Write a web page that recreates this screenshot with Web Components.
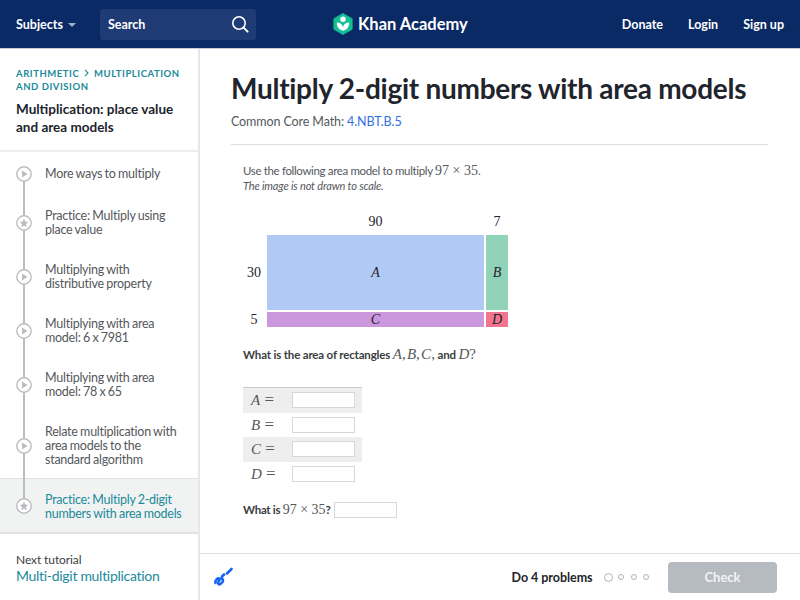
<!DOCTYPE html>
<html>
<head>
<meta charset="utf-8">
<title>Multiply 2-digit numbers with area models</title>
<style>
    html, body { margin: 0; padding: 0; }
    body { width: 800px; height: 600px; overflow: hidden; background: #fff; font-family: Lato, "Liberation Sans", sans-serif; color: #21242c; }
    ka-page-body { height: 551px; }
</style>
</head>
<body>
<ka-header></ka-header>
<ka-page-body>
    <ka-sidebar slot="side">
        <ka-lesson kind="play">More ways to multiply</ka-lesson>
        <ka-lesson kind="star">Practice: Multiply using place value</ka-lesson>
        <ka-lesson kind="play">Multiplying with distributive property</ka-lesson>
        <ka-lesson kind="play">Multiplying with area model: 6 x 7981</ka-lesson>
        <ka-lesson kind="play">Multiplying with area model: 78 x 65</ka-lesson>
        <ka-lesson kind="play">Relate multiplication with area models to the standard algorithm</ka-lesson>
        <ka-lesson kind="star" active last>Practice: Multiply 2-digit numbers with area models</ka-lesson>
    </ka-sidebar>
    <ka-exercise slot="main">
        <ka-area-model></ka-area-model>
        <ka-answer-table>
            <ka-answer-row shaded><ka-math var>A</ka-math></ka-answer-row>
            <ka-answer-row><ka-math var>B</ka-math></ka-answer-row>
            <ka-answer-row shaded><ka-math var>C</ka-math></ka-answer-row>
            <ka-answer-row><ka-math var>D</ka-math></ka-answer-row>
        </ka-answer-table>
    </ka-exercise>
</ka-page-body>

<script>
const LATO = 'Lato, "Liberation Sans", sans-serif';

class KaMath extends HTMLElement {
    constructor() {
        super();
        this.attachShadow({mode: 'open'}).innerHTML = `
<style>
    :host { font-family: "Liberation Serif", serif; font-size: var(--math-size, 14px); color: var(--math-color, #55585c); font-weight: 400; letter-spacing: 0; word-spacing: 0; }
    :host([var]) { font-style: italic; }
</style><slot></slot>`;
    }
}

class KaHeader extends HTMLElement {
    constructor() {
        super();
        this.attachShadow({mode: 'open'}).innerHTML = `
<style>
    :host { display: flex; align-items: center; height: 48px; background: #0a2a66; border-bottom: 1px solid #c9ccd6; color: #fff; font-family: ${LATO}; font-size: 12.5px; font-weight: 700; }
    .subjects { display: flex; align-items: center; margin-left: 16px; width: 84px; }
    .caret { width: 0; height: 0; margin-left: 5px; margin-top: 1px; border: 4px solid transparent; border-top: 4px solid #9fb0cc; border-bottom: 0; }
    .search { display: flex; align-items: center; justify-content: space-between; box-sizing: border-box; width: 156px; height: 31px; padding: 0 7px 0 8px; background: #1f3b75; border-radius: 3px; }
    .search svg { display: block; }
    .logo { flex: 1; display: flex; align-items: center; justify-content: center; gap: 5px; margin-left: -77px; font-size: 16.5px; }
    nav { display: flex; gap: 25px; margin-right: 16px; }
</style>
<div class="subjects">Subjects<span class="caret"></span></div>
<div class="search">Search
    <svg width="18" height="18" viewBox="0 0 18 18" fill="none" stroke="#fff" stroke-width="1.6"><circle cx="8" cy="8" r="6.2"/><path d="M12.6 12.6 16.600 16.600" stroke-linecap="round" stroke-width="2"/></svg>
</div>
<div class="logo">
    <svg width="20" height="22" viewBox="0 0 22 24"><path d="M11 0.5 21 6.2V17.8L11 23.5 1 17.8V6.2Z" fill="#14bf96" stroke="#14bf96" stroke-linejoin="round"/><circle cx="11" cy="6.800" r="3" fill="#fff"/><path d="M4.2 10.400c3.800 0 6.200 2 6.800 5.400.6-3.400 3-5.400 6.800-5.400 0 5-2.600 8.400-6.800 9-4.200-.6-6.800-4-6.800-9z" fill="#fff"/></svg>
    <span>Khan Academy</span>
</div>
<nav><span>Donate</span><span>Login</span><span>Sign up</span></nav>`;
    }
}

class KaPageBody extends HTMLElement {
    constructor() {
        super();
        this.attachShadow({mode: 'open'}).innerHTML = `
<style>
    :host { display: flex; }
    .side { flex: 0 0 198px; display: flex; border-right: 2px solid #e6e7e9; }
    .main { flex: 1; display: flex; min-width: 0; }
</style>
<div class="side"><slot name="side"></slot></div>
<div class="main"><slot name="main"></slot></div>`;
    }
}

class KaSidebar extends HTMLElement {
    constructor() {
        super();
        this.attachShadow({mode: 'open'}).innerHTML = `
<style>
    :host { display: flex; flex-direction: column; flex: 1; min-width: 0; font-family: ${LATO}; }
    .top { box-sizing: border-box; height: 103px; padding: 18px 12px 0 16px; border-bottom: 2px solid #eeeeef; }
    .crumbs { font-size: 9.500px; line-height: 13px; font-weight: 700; letter-spacing: .55px; color: #1b8a9a; text-transform: uppercase; }
    .crumbs svg { margin: 0 2px 0 2px; }
    h2 { margin: 7px 0 0; font-size: 13.500px; line-height: 18px; font-weight: 700; color: #21242c; }
    .list { padding-top: 2px; }
    .next { padding: 18px 16px 0; font-size: 12px; line-height: 16px; letter-spacing: -.1px; color: #3b3e40; }
    .next a { display: block; font-size: 14px; line-height: 16px; letter-spacing: -.3px; color: #1b8a9a; }
</style>
<div class="top">
    <div class="crumbs">Arithmetic <svg width="5" height="8" viewBox="0 0 5 8" fill="none" stroke="#1b8a9a" stroke-width="1.100"><path d="M1 .8 4 4 1 7.200"/></svg> Multiplication<br>and division</div>
    <h2>Multiplication: place value<br>and area models</h2>
</div>
<div class="list"><slot></slot></div>
<div class="next">Next tutorial<a>Multi-digit multiplication</a></div>`;
    }
}

class KaLesson extends HTMLElement {
    constructor() {
        super();
        this.attachShadow({mode: 'open'}).innerHTML = `
<style>
    :host { display: flex; align-items: center; position: relative; box-sizing: border-box; padding: 13px 10px 13px 45px; font-family: ${LATO}; font-size: 12.500px; line-height: 14px; letter-spacing: -.25px; word-spacing: -.5px; color: #55585c; }
    :host([first]) { min-height: 42px; align-items: flex-start; }
    :host([active]) { margin-top: -2px; background: #f1f3f3; color: #1b8a9a; padding: 14px 10px 11px 45px; border-top: 1px solid #dfe1e3; border-bottom: 2px solid #dfe1e3; }
    .rail { position: absolute; left: 23px; top: 0; bottom: 0; width: 2px; background: #bbbdc0; }
    :host([first]) .rail { top: 20px; }
    :host([last]) .rail { bottom: 50%; top: -1px; }
    svg { position: absolute; left: 16px; top: 50%; margin-top: -8px; }
    :host([first]) svg { top: 12px; margin-top: 0; }
</style>
<div class="rail"></div>
<svg width="16" height="16" viewBox="0 0 16 16"><circle cx="8" cy="8" r="7.200" fill="#fff" stroke="#bbbdc0" stroke-width="1.400"/><path class="glyph" fill="#bbbdc0"/></svg>
<span><slot></slot></span>`;
    }
    connectedCallback(){
        let glyph = this.shadowRoot.querySelector('.glyph');
        if(this.getAttribute('kind') == 'star'){
            glyph.setAttribute('d', 'M8 3.600 9.300 6.600 12.400 6.900 10 9 10.800 12.200 8 10.500 5.200 12.200 6 9 3.600 6.900 6.700 6.600Z');
        } else {
            glyph.setAttribute('d', 'M6 4.400 11.600 8 6 11.600Z');
        }
        if(!this.previousElementSibling) this.setAttribute('first', '');
    }
}

class KaExercise extends HTMLElement {
    constructor() {
        super();
        this.attachShadow({mode: 'open'}).innerHTML = `
<style>
    :host { display: flex; flex-direction: column; flex: 1; min-width: 0; font-family: ${LATO}; color: #3b3e40; }
    .content { flex: 1; padding: 0 32px 0 31px; }
    h1 { margin: 0; padding-top: 22px; font-size: 28px; line-height: 34px; font-weight: 700; letter-spacing: -.27px; color: #21242c; white-space: nowrap; }
    .standard { margin-top: 9px; font-size: 12.500px; line-height: 16px; letter-spacing: -.1px; padding-bottom: 14px; border-bottom: 1px solid #dcdde0; color: #55585c; }
    .standard a { color: #2f6fe0; }
    .problem { padding: 18px 0 0 12px; font-size: 11.500px; letter-spacing: -.35px; }
    .intro { line-height: 16px; color: #55585c; }
    .intro em { display: block; margin-top: -1px; font-size: 11px; line-height: 16px; letter-spacing: -.15px; color: #55585c; }
    .sum { margin-top: 16px; display: flex; align-items: center; gap: 3px; height: 16px; font-weight: 700; letter-spacing: -.3px; }
    .box { display: block; box-sizing: border-box; width: 63px; height: 16px; border: 1px solid #d6d8da; background: #fff; }
    footer { flex: 0 0 46px; display: flex; align-items: center; border-top: 1px solid #dcdde0; padding: 0 23px 0 13px; }
    .hint { display: block; margin-top: -1px; }
    .count { margin-left: auto; font-size: 12.500px; letter-spacing: -.05px; font-weight: 700; color: #21242c; }
    .dots { display: flex; align-items: center; gap: 6.500px; margin: 0 19px 0 11px; }
    .dots span { box-sizing: border-box; width: 6px; height: 6px; border: 1px solid #b0b2b5; border-radius: 50%; }
    .dots span:first-child { width: 9px; height: 9px; margin-right: -1px; }
    .check { display: flex; align-items: center; justify-content: center; width: 109px; height: 31px; background: #b6bac1; border-radius: 4px; color: #f2f3f4; font-size: 13px; font-weight: 700; }
</style>
<div class="content">
    <h1>Multiply 2-digit numbers with area models</h1>
    <div class="standard">Common Core Math: <a>4.NBT.B.5</a></div>
    <div class="problem">
        <div class="intro">Use the following area model to multiply <ka-math>97 &#215; 35</ka-math>.<em>The image is not drawn to scale.</em></div>
        <slot></slot>
        <div class="sum"><span>What is <ka-math>97 &#215; 35</ka-math>?</span><span class="box"></span></div>
    </div>
</div>
<footer>
    <svg class="hint" width="20" height="20" viewBox="0 0 20 20" fill="none" stroke="#1865f2" stroke-width="2.600" stroke-linecap="round" stroke-linejoin="round"><path d="M2.500 16C2 13 5 10.500 6.500 11.500 8 12.500 4 15.500 5.500 17 7 18.500 10.500 14.500 10 13 9.500 11.500 8 11.500 9 9.500L11 7.500"/><path d="M14 6.500 18.500 2"/></svg>
    <span class="count">Do 4 problems</span>
    <div class="dots"><span></span><span></span><span></span><span></span></div>
    <div class="check">Check</div>
</footer>`;
    }
}

class KaAreaModel extends HTMLElement {
    constructor() {
        super();
        this.attachShadow({mode: 'open'}).innerHTML = `
<style>
    :host { display: grid; grid-template-columns: 22px 217px 22px; grid-template-rows: 20px 75px 15px; gap: 2px; justify-items: center; align-items: center; margin-top: 19px; width: 265px; font-family: "Liberation Serif", serif; font-size: 14px; letter-spacing: 0; color: #21242c; --math-size: 14px; --math-color: #21242c; }
    .cell { width: 100%; height: 100%; display: flex; align-items: center; justify-content: center; }
    .head { margin-bottom: 2px; }
    .a { background: #b1caf5; } .b { background: #90d3b9; } .c { background: #cb97dd; } .d { background: #f1758f; }
</style>
<span></span><span class="head">90</span><span class="head">7</span>
<span>30</span><div class="cell a"><ka-math var>A</ka-math></div><div class="cell b"><ka-math var>B</ka-math></div>
<span>5</span><div class="cell c"><ka-math var>C</ka-math></div><div class="cell d"><ka-math var>D</ka-math></div>`;
    }
}

class KaAnswerTable extends HTMLElement {
    constructor() {
        super();
        this.attachShadow({mode: 'open'}).innerHTML = `
<style>
    :host { display: block; font-family: ${LATO}; }
    .question { margin-top: 19px; line-height: 16px; font-weight: 700; letter-spacing: -.17px; color: #3b3e40; }
    .rows { margin-top: 24px; width: 119px; border-top: 1px solid #c8cacc; }
    ka-math { --math-size: 15px; }
</style>
<div class="question">What is the area of rectangles <ka-math><i>A</i>,&#8202;<i>B</i>,&#8202;<i>C</i>,</ka-math> and <ka-math><i>D</i>?</ka-math></div>
<div class="rows"><slot></slot></div>`;
    }
}

class KaAnswerRow extends HTMLElement {
    constructor() {
        super();
        this.attachShadow({mode: 'open'}).innerHTML = `
<style>
    :host { display: flex; align-items: center; box-sizing: border-box; height: 24.500px; padding-left: 8px; font-family: "Liberation Serif", serif; font-size: 17px; letter-spacing: 0; color: #55585c; --math-color: #55585c; --math-size: 15px; }
    :host([shaded]) { background: #eeeeee; }
    .label { width: 41px; }
    .box { box-sizing: border-box; width: 63px; height: 16px; border: 1px solid #d6d8da; background: #fff; }
</style>
<span class="label"><slot></slot> =</span><div class="box"></div>`;
    }
}

customElements.define('ka-math', KaMath);
customElements.define('ka-header', KaHeader);
customElements.define('ka-page-body', KaPageBody);
customElements.define('ka-sidebar', KaSidebar);
customElements.define('ka-lesson', KaLesson);
customElements.define('ka-exercise', KaExercise);
customElements.define('ka-area-model', KaAreaModel);
customElements.define('ka-answer-table', KaAnswerTable);
customElements.define('ka-answer-row', KaAnswerRow);
</script>
</body>
</html>
